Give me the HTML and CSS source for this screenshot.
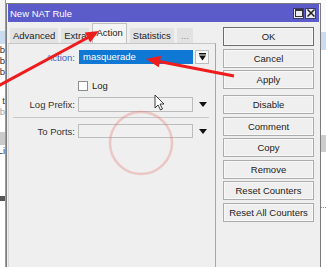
FILE: index.html
```html
<!DOCTYPE html>
<html>
<head>
<meta charset="utf-8">
<link rel="stylesheet" href="styles.css">
</head>
<body>
<div class="screen">
  <div class="bg bg-left">
    <div class="bgrow top"></div>
    <div class="bgrow sel"></div>
    <div class="bgrow txt">b</div>
    <div class="bgrow txt">b</div>
    <div class="bgrow txt">b</div>
    <div class="bgrow blank1"></div>
    <div class="bgrow txt">t</div>
    <div class="bgrow txt faint">b</div>
    <div class="bgrow blank2"></div>
    <div class="bgrow band"></div>
    <div class="bgrow txt">Li</div>
    <div class="bgrow blank3"></div>
    <div class="bgrow mark"></div>
    <div class="bgrow rest"></div>
  </div>

  <div class="window">
    <div class="titlebar">
      <span class="title">New NAT Rule</span>
      <div class="tb-btns">
        <span class="tb-btn"><svg width="8" height="8" viewBox="0 0 8 8"><rect x="0.5" y="0.5" width="7" height="7" fill="none" stroke="#333" stroke-width="1"/><line x1="0" y1="1.5" x2="8" y2="1.5" stroke="#333" stroke-width="1"/></svg></span>
        <span class="tb-btn"><svg width="8" height="8" viewBox="0 0 8 8"><path d="M0.5 0.5 L7.5 7.5 M7.5 0.5 L0.5 7.5" stroke="#222" stroke-width="1.5"/></svg></span>
      </div>
    </div>
    <div class="body">
      <div class="panel">
        <div class="tabs">
          <span class="tab">Advanced</span>
          <span class="tab">Extra</span>
          <span class="tab active">Action</span>
          <span class="tab">Statistics</span>
          <span class="tab more">...</span>
        </div>
        <div class="tab-content">
          <div class="frow action-row">
            <label class="lbl blue">Action:</label>
            <div class="field selected">masquerade</div>
            <span class="dd-btn"><svg width="7" height="8" viewBox="0 0 7 8"><rect x="0" y="0" width="7" height="1.5" fill="#111"/><path d="M0 2.5 L7 2.5 L3.5 7.5 Z" fill="#111"/></svg></span>
          </div>
          <div class="frow log-row">
            <span></span>
            <div class="check"><span class="box"></span><span>Log</span></div>
          </div>
          <div class="frow prefix-row">
            <label class="lbl">Log Prefix:</label>
            <div class="field"></div>
            <span class="tri"></span>
          </div>
          <div class="sep"></div>
          <div class="frow ports-row">
            <label class="lbl">To Ports:</label>
            <div class="field"></div>
            <span class="tri"></span>
          </div>
        </div>
      </div>
      <div class="buttons">
        <div class="btn default">OK</div>
        <div class="btn">Cancel</div>
        <div class="btn apply">Apply</div>
        <div class="btn">Disable</div>
        <div class="btn">Comment</div>
        <div class="btn">Copy</div>
        <div class="btn">Remove</div>
        <div class="btn">Reset Counters</div>
        <div class="btn">Reset All Counters</div>
      </div>
    </div>
  </div>

  <div class="bg bg-right">
    <div class="bgrow rtop"></div>
    <div class="bgrow rsel"></div>
    <div class="bgrow rblank"></div>
    <div class="bgrow rband"></div>
    <div class="bgrow rblank2"></div>
    <div class="bgrow rdots"></div>
    <div class="bgrow rest"></div>
  </div>

  <svg class="overlay" width="326" height="267" viewBox="0 0 326 267">
    <circle cx="141" cy="143" r="31" fill="none" stroke="rgba(232,120,120,0.35)" stroke-width="2.5"/>
    <path d="M155 95 L155 108 L158 105 L160.5 110 L162.5 109 L160 104 L164 104 Z" fill="#fff" stroke="#111" stroke-width="0.8" stroke-linejoin="round"/>
    <line x1="-2" y1="86" x2="88" y2="37.5" stroke="#ee1c1c" stroke-width="3"/>
    <polygon points="99,31 90.2,42.5 84.8,32.4" fill="#ee1c1c"/>
    <line x1="234" y1="76" x2="158" y2="61.3" stroke="#ee1c1c" stroke-width="3"/>
    <polygon points="146,59 161,55.8 158.8,67.2" fill="#ee1c1c"/>
  </svg>
</div>
</body>
</html>
```
FILE: styles.css
```css
* { box-sizing: border-box; }
html, body { margin: 0; padding: 0; }
body {
  width: 326px;
  height: 267px;
  overflow: hidden;
  font-family: "Liberation Sans", Arial, sans-serif;
  font-size: 9.5px;
  color: #222;
}
.screen {
  position: relative;
  display: flex;
  width: 326px;
  height: 267px;
  background: #fff;
  overflow: hidden;
}

/* background application behind the dialog */
.bg { flex: none; display: flex; flex-direction: column; overflow: hidden; }
.bg-left { width: 6px; border-right: 1px solid #9a9a9a; }
.bg-right { width: 5px; }
.bgrow { flex: none; overflow: hidden; white-space: nowrap; display: flex; justify-content: flex-end; font-size: 9.5px; line-height: 11px; color: #333; }
.bgrow.top { height: 31px; background: #f3f3f3; }
.bgrow.sel { height: 13px; background: #c9dcf2; }
.bgrow.txt { height: 11px; background: #fff; }
.bgrow.faint { color: #9aa; }
.bgrow.blank1 { height: 18px; }
.bgrow.blank2 { height: 15px; }
.bgrow.band { height: 13px; background: #cacaca; }
.bgrow.blank3 { height: 40px; }
.bgrow.mark { height: 5px; background: #555; }
.bgrow.rest { flex: 1; background: #fff; }
.bgrow.rtop { height: 32px; background: #fbfbfb; }
.bgrow.rsel { height: 18px; background: #c9dcf2; }
.bgrow.rblank { height: 85px; }
.bgrow.rband { height: 17px; background: #cdcdcd; }
.bgrow.rblank2 { height: 55px; }
.bgrow.rdots { height: 1px; border-top: 1px dotted #888; }

/* dialog window */
.window {
  width: 315px;
  flex: none;
  margin-top: 3px;
  border: 1px solid #7c7c7c;
  border-bottom: none;
  padding: 0 1px;
  background: #efefef;
  display: flex;
  flex-direction: column;
}
.titlebar {
  height: 18px;
  flex: none;
  background: #5b5bc9;
  color: #fff;
  display: flex;
  align-items: center;
  justify-content: space-between;
  padding: 0 3px 0 2px;
  font-size: 9.5px;
}
.tb-btns { display: flex; gap: 1px; }
.tb-btn {
  width: 11px;
  height: 11px;
  background: #ebebf3;
  border: 1px solid #3a3a6a;
  display: flex;
  align-items: center;
  justify-content: center;
}
.body { flex: 1; display: flex; }

/* tab panel */
.panel { width: 208px; flex: none; display: flex; flex-direction: column; }
.tabs {
  height: 21px;
  display: flex;
  align-items: flex-end;
  gap: 3px;
  padding-left: 2px;
}
.tab {
  height: 15px;
  line-height: 15px;
  padding: 0 3px;
  background: #e2e2e2;
  color: #222;
  white-space: nowrap;
}
.tab.active {
  height: 20px;
  line-height: 18px;
  background: #f4f4f4;
  border: 1px solid #c2c2c2;
  border-bottom: none;
  padding: 0 3px;
}
.tab.more { color: #888; padding: 0 4px; }
.tab-content {
  flex: 1;
  border-top: 1px solid #c6c6c6;
  border-right: 1px solid #a6a6a6;
  border-left: 1px solid #d8d8d8;
  padding-top: 6px;
  display: flex;
  flex-direction: column;
}
.frow {
  display: grid;
  grid-template-columns: 66px 115px 14px;
  column-gap: 3px;
  align-items: center;
}
.frow > :nth-child(3) { margin-left: -1px; }
.lbl { text-align: right; color: #333; white-space: nowrap; }
.lbl.blue { color: #3d5fc4; }
.action-row { height: 14px; }
.field {
  height: 14px;
  border: 1px solid #bcbcbc;
  background: #f0f0f0;
  padding-left: 3px;
  line-height: 12px;
}
.field.selected {
  background: #0f78d4;
  border-color: #0f78d4;
  color: #fff;
  margin-left: 1px;
}
.dd-btn {
  width: 14px;
  height: 14px;
  border: 1px solid #bdbdbd;
  background: #f7f7f7;
  display: flex;
  align-items: center;
  justify-content: center;
}
.log-row { margin-top: 16px; height: 10px; }
.check { display: flex; align-items: center; gap: 4px; }
.box { width: 10px; height: 10px; border: 1px solid #8d8d8d; background: #fff; }
.prefix-row { margin-top: 7px; height: 15px; }
.prefix-row .field { height: 15px; }
.tri {
  justify-self: center;
  width: 0;
  height: 0;
  border-left: 4.5px solid transparent;
  border-right: 4.5px solid transparent;
  border-top: 5px solid #111;
}
.sep {
  margin: 5px 6px 0 4px;
  height: 1px;
  background: #c8c8c8;
}
.ports-row { margin-top: 6px; height: 14px; }

/* buttons column */
.buttons {
  flex: 1;
  padding: 5px 5px 0 7px;
  display: flex;
  flex-direction: column;
  gap: 2.5px;
}
.btn {
  height: 19px;
  flex: none;
  border: 1px solid #acacac;
  background: #efefef;
  box-shadow: inset 0 0 0 1px #f8f8f8;
  display: flex;
  align-items: center;
  justify-content: center;
  color: #222;
  white-space: nowrap;
}
.btn.default { border-color: #6c6c6c; }
.btn.apply { margin-bottom: 3.5px; }

.overlay { position: absolute; left: 0; top: 0; pointer-events: none; }
```
